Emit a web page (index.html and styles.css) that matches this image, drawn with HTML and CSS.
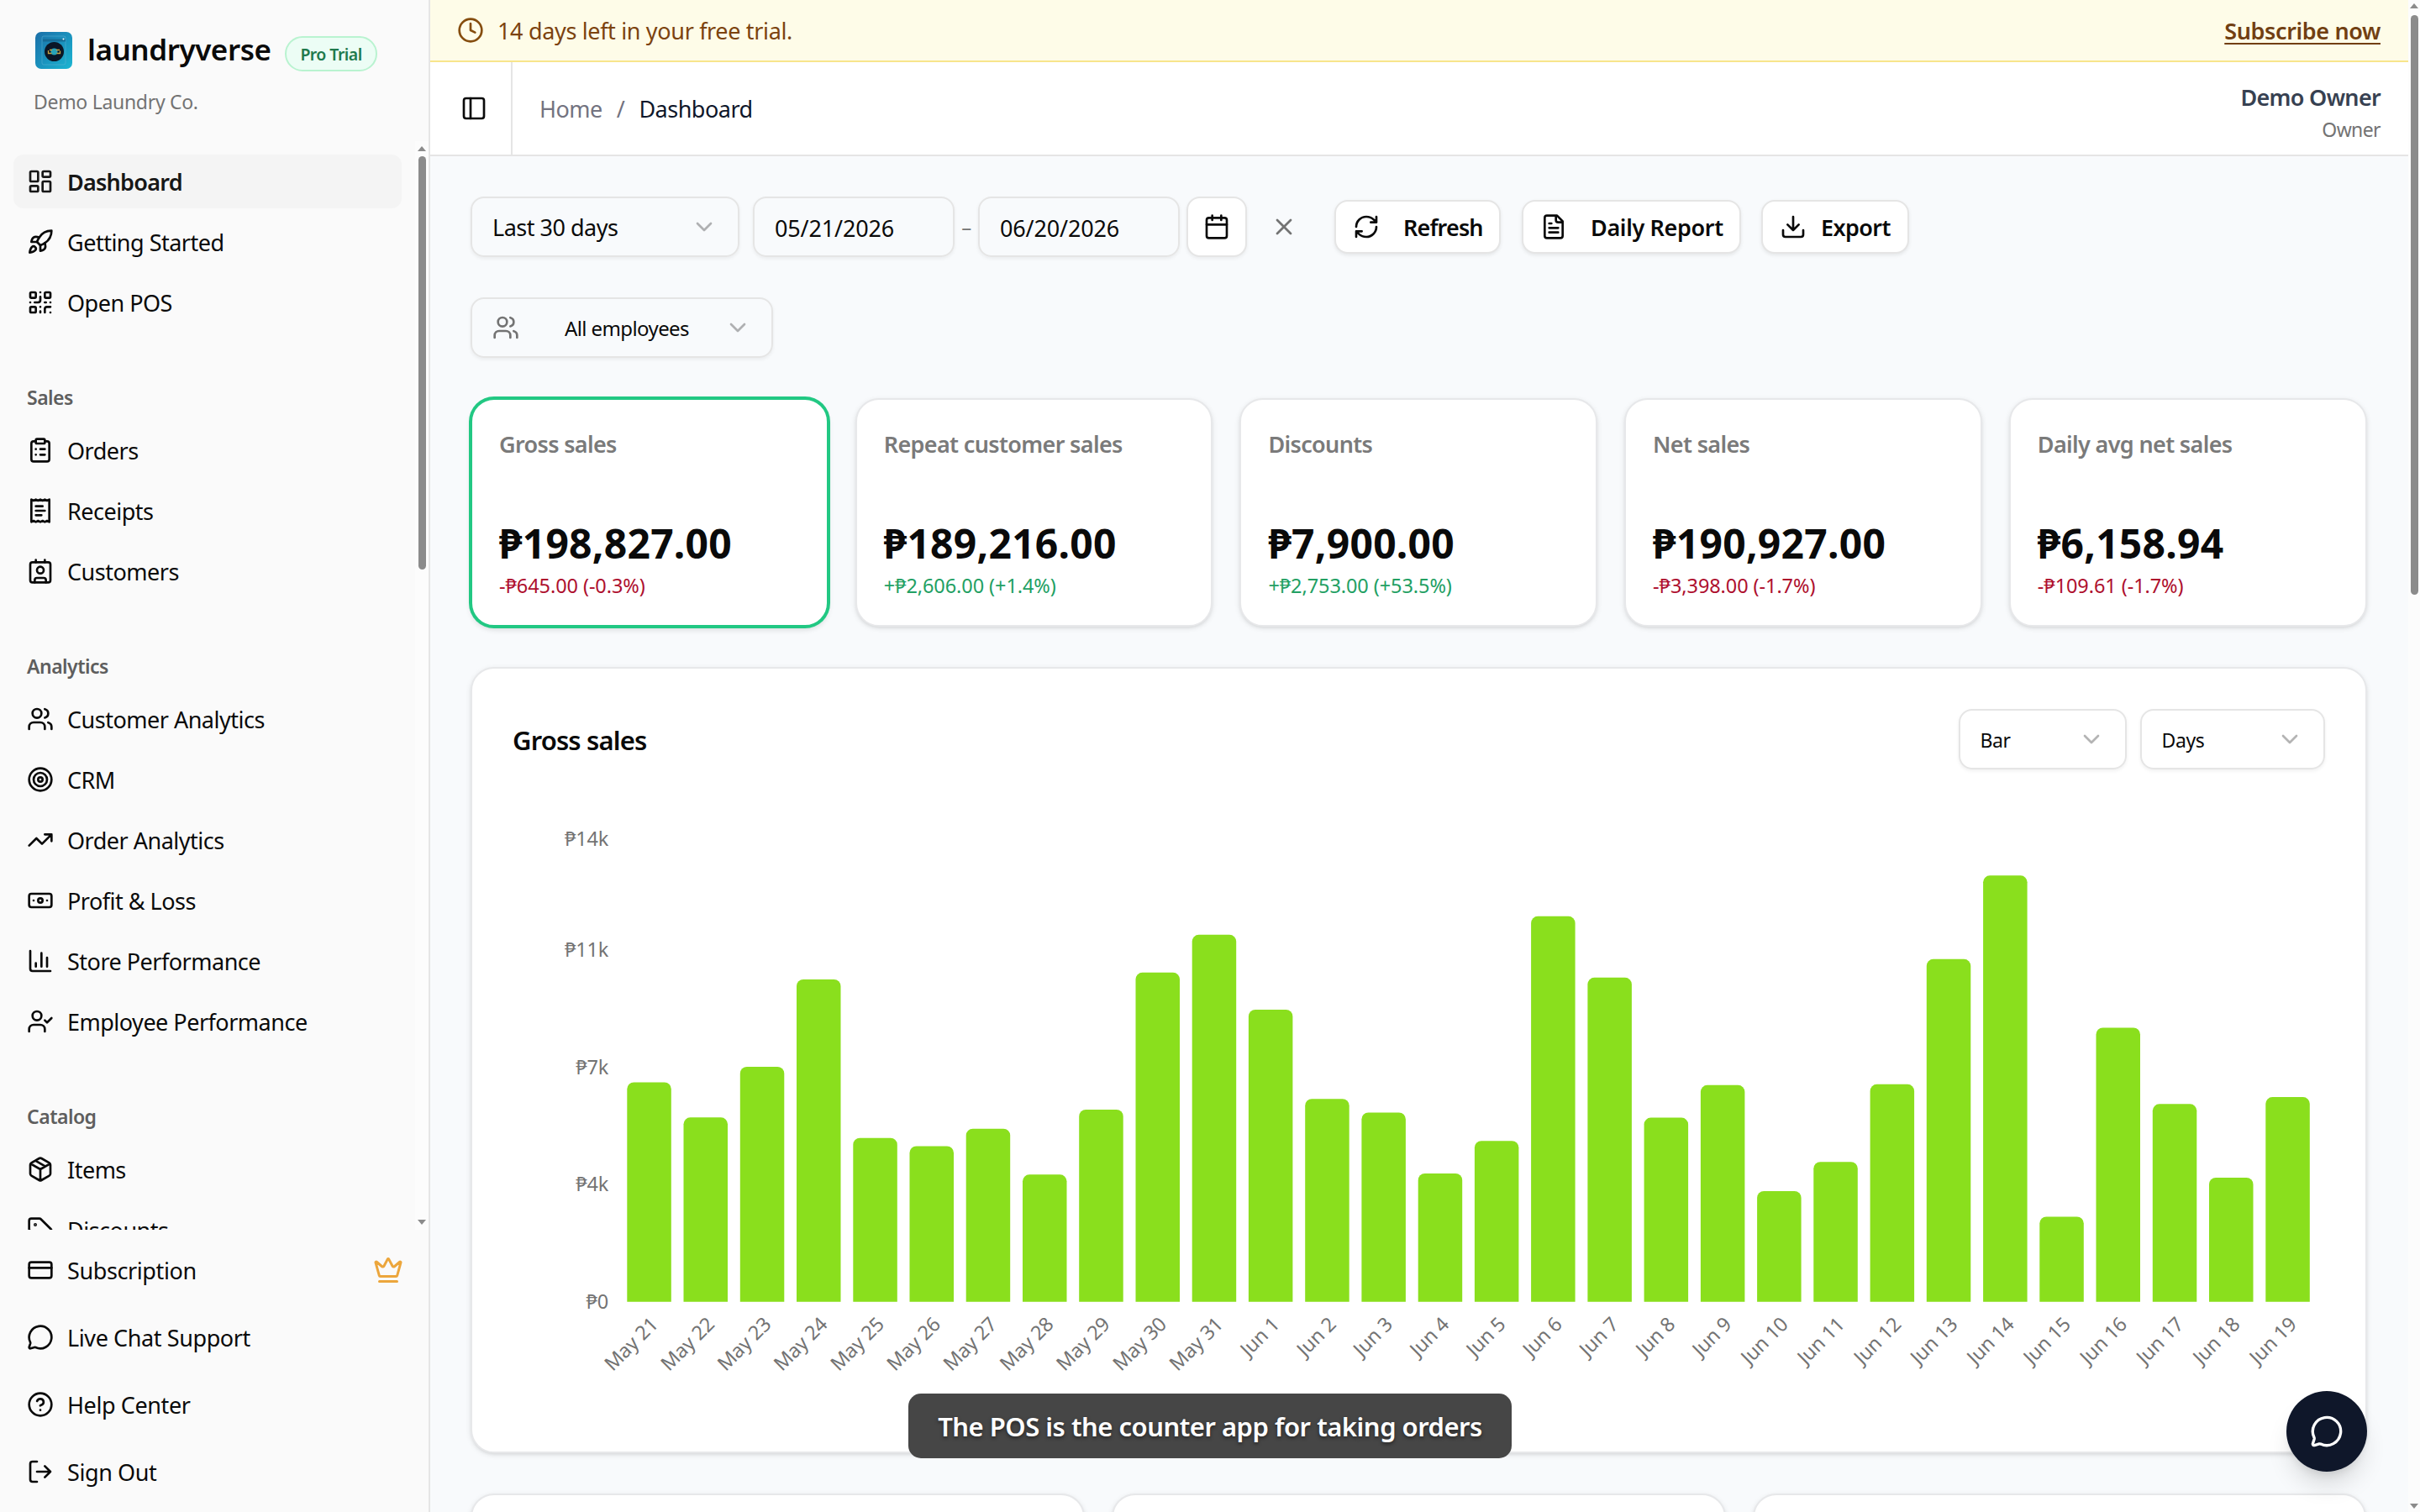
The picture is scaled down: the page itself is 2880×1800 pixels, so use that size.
FILE: index.html
```html
<!DOCTYPE html>
<html lang="en">
<head>
<meta charset="utf-8">
<title>Dashboard - laundryverse</title>
<link rel="stylesheet" href="styles.css">
</head>
<body>
<svg class="sprite" aria-hidden="true">
  <symbol id="dashboard" viewBox="0 0 24 24"><rect x="3" y="3" width="7" height="9" rx="1"/><rect x="14" y="3" width="7" height="5" rx="1"/><rect x="14" y="12" width="7" height="9" rx="1"/><rect x="3" y="16" width="7" height="5" rx="1"/></symbol>
  <symbol id="rocket" viewBox="0 0 24 24"><path d="M4.5 16.5c-1.5 1.26-2 5-2 5s3.74-.5 5-2c.71-.84.7-2.13-.09-2.91a2.18 2.18 0 0 0-2.91-.09z"/><path d="m12 15-3-3a22 22 0 0 1 2-3.95A12.88 12.88 0 0 1 22 2c0 2.72-.78 7.5-6 11a22.35 22.35 0 0 1-4 2z"/><path d="M9 12H4s.55-3.03 2-4c1.62-1.08 5 0 5 0"/><path d="M12 15v5s3.03-.55 4-2c1.08-1.62 0-5 0-5"/></symbol>
  <symbol id="qr" viewBox="0 0 24 24"><rect x="3" y="3" width="5" height="5" rx="1"/><rect x="16" y="3" width="5" height="5" rx="1"/><rect x="3" y="16" width="5" height="5" rx="1"/><path d="M21 16h-3a2 2 0 0 0-2 2v3M21 21v.01M12 7v3a2 2 0 0 1-2 2H7M3 12h.01M12 3h.01M12 16v.01M16 12h1M21 12v.01M12 21v-1"/></symbol>
  <symbol id="clipboard" viewBox="0 0 24 24"><rect x="8" y="2" width="8" height="4" rx="1"/><path d="M16 4h2a2 2 0 0 1 2 2v14a2 2 0 0 1-2 2H6a2 2 0 0 1-2-2V6a2 2 0 0 1 2-2h2M12 11h4M12 16h4M8 11h.01M8 16h.01"/></symbol>
  <symbol id="receipt" viewBox="0 0 24 24"><path d="M4 2v20l2-1 2 1 2-1 2 1 2-1 2 1 2-1 2 1V2l-2 1-2-1-2 1-2-1-2 1-2-1-2 1ZM14 8H8M16 12H8M13 16H8"/></symbol>
  <symbol id="contact" viewBox="0 0 24 24"><path d="M16 2v2M7 22v-2a2 2 0 0 1 2-2h6a2 2 0 0 1 2 2v2M8 2v2"/><circle cx="12" cy="11" r="3"/><rect x="3" y="4" width="18" height="18" rx="2"/></symbol>
  <symbol id="users" viewBox="0 0 24 24"><path d="M16 21v-2a4 4 0 0 0-4-4H6a4 4 0 0 0-4 4v2M22 21v-2a4 4 0 0 0-3-3.87M16 3.13a4 4 0 0 1 0 7.75"/><circle cx="9" cy="7" r="4"/></symbol>
  <symbol id="target" viewBox="0 0 24 24"><circle cx="12" cy="12" r="10"/><circle cx="12" cy="12" r="6"/><circle cx="12" cy="12" r="2"/></symbol>
  <symbol id="trend" viewBox="0 0 24 24"><path d="M22 7l-8.5 8.5-5-5L2 17M16 7h6v6"/></symbol>
  <symbol id="banknote" viewBox="0 0 24 24"><rect x="2" y="6" width="20" height="12" rx="2"/><circle cx="12" cy="12" r="2"/><path d="M6 12h.01M18 12h.01"/></symbol>
  <symbol id="columns" viewBox="0 0 24 24"><path d="M3 3v16a2 2 0 0 0 2 2h16M18 17V9M13 17V5M8 17v-3"/></symbol>
  <symbol id="user-check" viewBox="0 0 24 24"><path d="m16 11 2 2 4-4M16 21v-2a4 4 0 0 0-4-4H6a4 4 0 0 0-4 4v2"/><circle cx="9" cy="7" r="4"/></symbol>
  <symbol id="package" viewBox="0 0 24 24"><path d="M11 21.73a2 2 0 0 0 2 0l7-4A2 2 0 0 0 21 16V8a2 2 0 0 0-1-1.73l-7-4a2 2 0 0 0-2 0l-7 4A2 2 0 0 0 3 8v8a2 2 0 0 0 1 1.73zM12 22V12M3.29 7 12 12l8.71-5M7.5 4.27l9 5.15"/></symbol>
  <symbol id="tag" viewBox="0 0 24 24"><path d="M12.586 2.586A2 2 0 0 0 11.172 2H4a2 2 0 0 0-2 2v7.172a2 2 0 0 0 .586 1.414l8.704 8.704a2.426 2.426 0 0 0 3.42 0l6.58-6.58a2.426 2.426 0 0 0 0-3.42z"/><circle cx="7.5" cy="7.5" r=".5" fill="currentColor"/></symbol>
  <symbol id="card" viewBox="0 0 24 24"><rect x="2" y="5" width="20" height="14" rx="2"/><path d="M2 10h20"/></symbol>
  <symbol id="chat" viewBox="0 0 24 24"><path d="M2.992 16.342a2 2 0 0 1 .094 1.167l-1.065 3.29a1 1 0 0 0 1.236 1.168l3.413-.998a2 2 0 0 1 1.099.092 10 10 0 1 0-4.777-4.719"/></symbol>
  <symbol id="help" viewBox="0 0 24 24"><circle cx="12" cy="12" r="10"/><path d="M9.09 9a3 3 0 0 1 5.83 1c0 2-3 3-3 3M12 17h.01"/></symbol>
  <symbol id="logout" viewBox="0 0 24 24"><path d="M9 21H5a2 2 0 0 1-2-2V5a2 2 0 0 1 2-2h4M16 17l5-5-5-5M21 12H9"/></symbol>
  <symbol id="crown" viewBox="0 0 24 24"><path d="M11.562 3.266a.5.5 0 0 1 .876 0L15.39 8.87a1 1 0 0 0 1.516.294L21.183 5.5a.5.5 0 0 1 .798.519l-2.834 10.246a1 1 0 0 1-.956.734H5.81a1 1 0 0 1-.957-.734L2.02 6.02a.5.5 0 0 1 .798-.519l4.276 3.664a1 1 0 0 0 1.516-.294zM5 21h14"/></symbol>
  <symbol id="clock" viewBox="0 0 24 24"><circle cx="12" cy="12" r="10"/><path d="M12 6v6l4 2"/></symbol>
  <symbol id="panel" viewBox="0 0 24 24"><rect x="3" y="3" width="18" height="18" rx="2"/><path d="M9 3v18"/></symbol>
  <symbol id="calendar" viewBox="0 0 24 24"><path d="M8 2v4M16 2v4M3 10h18"/><rect x="3" y="4" width="18" height="18" rx="2"/></symbol>
  <symbol id="close" viewBox="0 0 24 24"><path d="M18 6 6 18M6 6l12 12"/></symbol>
  <symbol id="refresh" viewBox="0 0 24 24"><path d="M3 12a9 9 0 0 1 9-9 9.75 9.75 0 0 1 6.74 2.74L21 8M21 3v5h-5M21 12a9 9 0 0 1-9 9 9.75 9.75 0 0 1-6.74-2.74L3 16M8 16H3v5"/></symbol>
  <symbol id="file" viewBox="0 0 24 24"><path d="M15 2H6a2 2 0 0 0-2 2v16a2 2 0 0 0 2 2h12a2 2 0 0 0 2-2V7ZM14 2v4a2 2 0 0 0 2 2h4M10 9H8M16 13H8M16 17H8"/></symbol>
  <symbol id="download" viewBox="0 0 24 24"><path d="M21 15v4a2 2 0 0 1-2 2H5a2 2 0 0 1-2-2v-4M7 10l5 5 5-5M12 15V3"/></symbol>
  <symbol id="chevron" viewBox="0 0 24 24"><path d="m6 9 6 6 6-6"/></symbol>
</svg>

<div class="app">
  <aside class="sidebar">
    <div class="brand">
      <div class="brand-row">
        <svg class="logo" viewBox="0 0 44 44">
          <defs><linearGradient id="lg" x1="0" y1="0" x2="1" y2="1"><stop offset="0" stop-color="#1b6fa8"/><stop offset=".5" stop-color="#1a91bd"/><stop offset="1" stop-color="#1cb6d2"/></linearGradient></defs>
          <rect width="44" height="44" rx="7" fill="url(#lg)"/>
          <rect x="8" y="5" width="28" height="34" rx="2" fill="none" stroke="#5fb4d6" stroke-opacity=".5"/>
          <path d="M9 10h27" stroke="#145a80" stroke-opacity=".6" stroke-width="3"/>
          <circle cx="33.500" cy="8.500" r="1" fill="#fff"/>
          <circle cx="22.500" cy="23.500" r="11.500" fill="#0b1626"/>
          <circle cx="22.500" cy="23.500" r="4" fill="#27a3b8"/>
          <path d="M15.500 22v3.500h4M29.500 22.500v3h-4M17 21.500h3M25 21.500h4" fill="none" stroke="#c8a545" stroke-width="1.300"/>
        </svg>
        <span class="wordmark">laundryverse</span>
        <span class="trial-badge">Pro Trial</span>
      </div>
      <div class="company">Demo Laundry Co.</div>
    </div>

    <div class="nav-scroll">
      <nav class="nav">
        <div class="nav-group">
          <a class="nav-item active"><svg class="icon"><use href="#dashboard"/></svg>Dashboard</a>
          <a class="nav-item"><svg class="icon"><use href="#rocket"/></svg>Getting Started</a>
          <a class="nav-item"><svg class="icon"><use href="#qr"/></svg>Open POS</a>
        </div>
        <div class="nav-group">
          <div class="nav-label">Sales</div>
          <a class="nav-item"><svg class="icon"><use href="#clipboard"/></svg>Orders</a>
          <a class="nav-item"><svg class="icon"><use href="#receipt"/></svg>Receipts</a>
          <a class="nav-item"><svg class="icon"><use href="#contact"/></svg>Customers</a>
        </div>
        <div class="nav-group">
          <div class="nav-label">Analytics</div>
          <a class="nav-item"><svg class="icon"><use href="#users"/></svg>Customer Analytics</a>
          <a class="nav-item"><svg class="icon"><use href="#target"/></svg>CRM</a>
          <a class="nav-item"><svg class="icon"><use href="#trend"/></svg>Order Analytics</a>
          <a class="nav-item"><svg class="icon"><use href="#banknote"/></svg>Profit &amp; Loss</a>
          <a class="nav-item"><svg class="icon"><use href="#columns"/></svg>Store Performance</a>
          <a class="nav-item"><svg class="icon"><use href="#user-check"/></svg>Employee Performance</a>
        </div>
        <div class="nav-group">
          <div class="nav-label">Catalog</div>
          <a class="nav-item"><svg class="icon"><use href="#package"/></svg>Items</a>
          <a class="nav-item"><svg class="icon"><use href="#tag"/></svg>Discounts</a>
        </div>
      </nav>
      <div class="scrollbar scrollbar-nav"><i class="arrow-up"></i><i class="thumb"></i><i class="arrow-down"></i></div>
    </div>

    <div class="nav-footer">
      <a class="nav-item"><svg class="icon"><use href="#card"/></svg>Subscription<svg class="icon crown"><use href="#crown"/></svg></a>
      <a class="nav-item"><svg class="icon"><use href="#chat"/></svg>Live Chat Support</a>
      <a class="nav-item"><svg class="icon"><use href="#help"/></svg>Help Center</a>
      <a class="nav-item"><svg class="icon"><use href="#logout"/></svg>Sign Out</a>
    </div>
  </aside>

  <main class="main">
    <div class="banner">
      <svg class="icon"><use href="#clock"/></svg>
      <span class="banner-text">14 days left in your free trial.</span>
      <a class="subscribe">Subscribe now</a>
    </div>
    <header class="topbar">
      <div class="toggle"><svg class="icon"><use href="#panel"/></svg></div>
      <div class="crumbs"><span>Home</span><span>/</span><span class="here">Dashboard</span></div>
      <div class="account"><div class="account-name">Demo Owner</div><div class="account-role">Owner</div></div>
    </header>

    <div class="content">
      <div class="filters">
        <div class="field preset">Last 30 days<svg class="icon chevron"><use href="#chevron"/></svg></div>
        <div class="dates">
          <div class="field date">05/21/2026</div>
          <span class="dash">–</span>
          <div class="field date">06/20/2026</div>
          <div class="field square"><svg class="icon"><use href="#calendar"/></svg></div>
          <div class="clear"><svg class="icon"><use href="#close"/></svg></div>
        </div>
        <div class="actions">
          <button class="button refresh"><svg class="icon"><use href="#refresh"/></svg>Refresh</button>
          <button class="button report"><svg class="icon"><use href="#file"/></svg>Daily Report</button>
          <button class="button export"><svg class="icon"><use href="#download"/></svg>Export</button>
        </div>
      </div>
      <div class="field employees"><svg class="icon"><use href="#users"/></svg><span>All employees</span><svg class="icon chevron"><use href="#chevron"/></svg></div>

      <section class="stats">
        <div class="card stat selected"><h3>Gross sales</h3><div class="value">₱198,827.00</div><div class="delta down">-₱645.00 (-0.3%)</div></div>
        <div class="card stat"><h3>Repeat customer sales</h3><div class="value">₱189,216.00</div><div class="delta up">+₱2,606.00 (+1.4%)</div></div>
        <div class="card stat"><h3>Discounts</h3><div class="value">₱7,900.00</div><div class="delta up">+₱2,753.00 (+53.5%)</div></div>
        <div class="card stat"><h3>Net sales</h3><div class="value">₱190,927.00</div><div class="delta down">-₱3,398.00 (-1.7%)</div></div>
        <div class="card stat"><h3>Daily avg net sales</h3><div class="value">₱6,158.94</div><div class="delta down">-₱109.61 (-1.7%)</div></div>
      </section>

      <section class="card chart-card">
        <div class="chart-head">
          <h2>Gross sales</h2>
          <div class="field small bar-select">Bar<svg class="icon chevron"><use href="#chevron"/></svg></div>
          <div class="field small day-select">Days<svg class="icon chevron"><use href="#chevron"/></svg></div>
        </div>
        <svg class="chart" viewBox="0 0 2158 716" width="2158" height="716">
          <defs><clipPath id="plot"><rect x="120" y="0" width="2038" height="585.700"/></clipPath></defs>
          <g class="axis" text-anchor="end">
            <text x="114" y="43">₱14k</text><text x="114" y="175">₱11k</text><text x="114" y="314.500">₱7k</text><text x="114" y="454">₱4k</text><text x="114" y="593.500">₱0</text>
          </g>
          <g class="bars" clip-path="url(#plot)">
            <rect x="136.300" y="324.500" width="52.500" height="300" rx="8"/>
            <rect x="203.500" y="366.300" width="52.500" height="300" rx="8"/>
            <rect x="270.800" y="306" width="52.500" height="300" rx="8"/>
            <rect x="338" y="202" width="52.500" height="400" rx="8"/>
            <rect x="405.300" y="390.700" width="52.500" height="300" rx="8"/>
            <rect x="472.500" y="400.500" width="52.500" height="300" rx="8"/>
            <rect x="539.700" y="379.700" width="52.500" height="300" rx="8"/>
            <rect x="607" y="434.300" width="52.500" height="300" rx="8"/>
            <rect x="674.200" y="357" width="52.500" height="300" rx="8"/>
            <rect x="741.500" y="193.800" width="52.500" height="500" rx="8"/>
            <rect x="808.700" y="148.800" width="52.500" height="500" rx="8"/>
            <rect x="875.900" y="238" width="52.500" height="500" rx="8"/>
            <rect x="943.200" y="344.200" width="52.500" height="300" rx="8"/>
            <rect x="1010.400" y="360.500" width="52.500" height="300" rx="8"/>
            <rect x="1077.700" y="433" width="52.500" height="300" rx="8"/>
            <rect x="1144.900" y="394.200" width="52.500" height="300" rx="8"/>
            <rect x="1212.100" y="126.800" width="52.500" height="500" rx="8"/>
            <rect x="1279.400" y="199.800" width="52.500" height="500" rx="8"/>
            <rect x="1346.600" y="366.600" width="52.500" height="300" rx="8"/>
            <rect x="1413.900" y="327.800" width="52.500" height="300" rx="8"/>
            <rect x="1481.100" y="453.900" width="52.500" height="300" rx="8"/>
            <rect x="1548.300" y="419.200" width="52.500" height="300" rx="8"/>
            <rect x="1615.600" y="326.800" width="52.500" height="300" rx="8"/>
            <rect x="1682.800" y="177.800" width="52.500" height="500" rx="8"/>
            <rect x="1750.100" y="78.300" width="52.500" height="600" rx="8"/>
            <rect x="1817.300" y="484.500" width="52.500" height="300" rx="8"/>
            <rect x="1884.500" y="259.500" width="52.500" height="400" rx="8"/>
            <rect x="1951.800" y="350.300" width="52.500" height="300" rx="8"/>
            <rect x="2019" y="438" width="52.500" height="300" rx="8"/>
            <rect x="2086.300" y="342.100" width="52.500" height="300" rx="8"/>
          </g>
          <g class="axis" text-anchor="end">
            <text transform="translate(162.500 602) rotate(-45)" dy="17">May 21</text>
            <text transform="translate(229.700 602) rotate(-45)" dy="17">May 22</text>
            <text transform="translate(297 602) rotate(-45)" dy="17">May 23</text>
            <text transform="translate(364.200 602) rotate(-45)" dy="17">May 24</text>
            <text transform="translate(431.500 602) rotate(-45)" dy="17">May 25</text>
            <text transform="translate(498.700 602) rotate(-45)" dy="17">May 26</text>
            <text transform="translate(565.900 602) rotate(-45)" dy="17">May 27</text>
            <text transform="translate(633.200 602) rotate(-45)" dy="17">May 28</text>
            <text transform="translate(700.400 602) rotate(-45)" dy="17">May 29</text>
            <text transform="translate(767.700 602) rotate(-45)" dy="17">May 30</text>
            <text transform="translate(834.900 602) rotate(-45)" dy="17">May 31</text>
            <text transform="translate(902.100 602) rotate(-45)" dy="17">Jun 1</text>
            <text transform="translate(969.400 602) rotate(-45)" dy="17">Jun 2</text>
            <text transform="translate(1036.600 602) rotate(-45)" dy="17">Jun 3</text>
            <text transform="translate(1103.900 602) rotate(-45)" dy="17">Jun 4</text>
            <text transform="translate(1171.100 602) rotate(-45)" dy="17">Jun 5</text>
            <text transform="translate(1238.300 602) rotate(-45)" dy="17">Jun 6</text>
            <text transform="translate(1305.600 602) rotate(-45)" dy="17">Jun 7</text>
            <text transform="translate(1372.800 602) rotate(-45)" dy="17">Jun 8</text>
            <text transform="translate(1440.100 602) rotate(-45)" dy="17">Jun 9</text>
            <text transform="translate(1507.300 602) rotate(-45)" dy="17">Jun 10</text>
            <text transform="translate(1574.500 602) rotate(-45)" dy="17">Jun 11</text>
            <text transform="translate(1641.800 602) rotate(-45)" dy="17">Jun 12</text>
            <text transform="translate(1709 602) rotate(-45)" dy="17">Jun 13</text>
            <text transform="translate(1776.300 602) rotate(-45)" dy="17">Jun 14</text>
            <text transform="translate(1843.500 602) rotate(-45)" dy="17">Jun 15</text>
            <text transform="translate(1910.700 602) rotate(-45)" dy="17">Jun 16</text>
            <text transform="translate(1978 602) rotate(-45)" dy="17">Jun 17</text>
            <text transform="translate(2045.200 602) rotate(-45)" dy="17">Jun 18</text>
            <text transform="translate(2112.500 602) rotate(-45)" dy="17">Jun 19</text>
          </g>
        </svg>
      </section>

      <section class="panels"><div class="card"></div><div class="card"></div><div class="card"></div></section>
    </div>
  </main>
  <div class="scrollbar scrollbar-page"><i class="arrow-up"></i><i class="thumb"></i><i class="arrow-down"></i></div>
</div>

<div class="caption">The POS is the counter app for taking orders</div>
<div class="fab"><svg class="icon"><use href="#chat"/></svg></div>
</body>
</html>
```
FILE: styles.css
```css
* { box-sizing: border-box; }

body {
  margin: 0;
  width: 2880px;
  height: 1800px;
  overflow: hidden;
  font-family: "Noto Sans", "Open Sans", sans-serif;
  font-size: 27px;
  line-height: 40px;
  letter-spacing: -0.5px;
  color: #0a0a0a;
  background: #f8fafc;
}

h2, h3 { margin: 0; font-weight: 600; }

.sprite { display: none; }

.icon {
  width: 32px;
  height: 32px;
  flex: none;
  fill: none;
  stroke: currentColor;
  stroke-width: 2;
  stroke-linecap: round;
  stroke-linejoin: round;
}

.app { display: flex; height: 1800px; }

/* Sidebar */
.sidebar {
  width: 512px;
  flex: none;
  display: flex;
  flex-direction: column;
  background: #fafafa;
  border-right: 2px solid #e5e5e5;
}
.brand { height: 168px; padding: 38px 40px 0; }
.brand-row { display: flex; align-items: flex-start; height: 63px; }
.logo { width: 44px; height: 44px; margin-left: 2px; flex: none; }
.wordmark { margin-left: 18px; width: 235px; font-size: 35px; font-weight: 600; letter-spacing: -0.45px; line-height: 41px; }
.trial-badge {
  margin-top: 5px;
  width: 110px;
  height: 42px;
  border: 2px solid #b9f3d0;
  border-radius: 21px;
  background: #ecfdf5;
  color: #1f7a4d;
  font-size: 19.5px;
  font-weight: 600;
  letter-spacing: -0.55px;
  line-height: 40px;
  text-align: center;
}
.company { font-size: 23px; letter-spacing: -0.3px; color: #737373; }

.nav-scroll { display: flex; height: 1296px; overflow: hidden; }
.nav { flex: none; width: 494px; display: flex; flex-direction: column; gap: 16px; }
.nav-group { display: flex; flex-direction: column; gap: 8px; padding: 16px; flex: none; }
.nav-label {
  height: 64px;
  margin-bottom: -8px;
  padding-left: 16px;
  line-height: 67px;
  font-size: 23px;
  font-weight: 600;
  letter-spacing: -0.5px;
  color: #5e5e5e;
}
.nav-item { display: flex; align-items: center; gap: 16px; height: 64px; padding: 2px 16px 0; border-radius: 12px; flex: none; }
.nav-item .icon, .field .icon, .button .icon { margin-top: -2px; }
.nav-item.active { background: #f4f4f4; font-weight: 600; letter-spacing: -0.75px; color: #171717; }
.nav-footer { display: flex; flex-direction: column; gap: 16px; padding: 16px 14px 16px 16px; }
.nav-footer .nav-item { letter-spacing: -0.4px; }
.nav-footer .crown { width: 36px; height: 36px; margin-left: auto; color: #eca63c; }

.scrollbar { display: flex; flex-direction: column; align-items: center; flex: none; background: #fcfcfc; }
.scrollbar .thumb { width: 9px; border-radius: 5px; background: #8b8b8b; }
.arrow-up, .arrow-down { width: 0; height: 0; border: 5px solid transparent; }
.arrow-up { border-top: 0; border-bottom: 6px solid #8b8b8b; }
.arrow-down { margin-top: auto; border-bottom: 0; border-top: 6px solid #8b8b8b; }
.scrollbar-nav { width: 16px; padding: 6px 0; }
.scrollbar-nav .thumb { height: 492px; margin-top: 6px; }

/* Page header */
.main { width: 2354px; flex: none; height: 1800px; overflow: hidden; }
.banner {
  display: flex;
  align-items: center;
  height: 74px;
  padding: 0 33px 0 32px;
  border-bottom: 2px solid #f8e58c;
  background: #fefce8;
  color: #854d0e;
}
.banner-text { margin: 2px 0 0 16px; letter-spacing: -0.34px; color: #7c430f; }
.subscribe {
  margin: 2px 0 0 auto;
  font-weight: 600;
  letter-spacing: -0.38px;
  color: #713f12;
  text-decoration: underline;
  text-decoration-thickness: 2px;
  text-underline-offset: 4px;
}
.topbar { display: flex; height: 112px; border-bottom: 2px solid #e5e5e5; background: #fff; }
.toggle { display: flex; align-items: center; justify-content: center; width: 98px; padding-left: 8px; border-right: 2px solid #e5e5e5; }
.crumbs { display: flex; align-items: center; gap: 17px; padding: 2px 0 0 32px; color: #737380; }
.crumbs .here { color: #0f172a; }
.account { margin-left: auto; padding: 22px 33px 0 0; text-align: right; }
.account-name { font-weight: 600; color: #374151; letter-spacing: -0.7px; }
.account-role { margin-top: -2px; font-size: 23px; letter-spacing: -0.6px; color: #737373; }

/* Filters */
.content { padding: 48px 49.5px 48px 48px; }
.filters { display: flex; align-items: center; gap: 16px; height: 72px; }
.field {
  display: flex;
  align-items: center;
  height: 72px;
  padding: 2px 24px 0;
  border: 2px solid #e5e5e5;
  border-radius: 16px;
  box-shadow: 0 2px 4px rgba(0, 0, 0, 0.06);
}
.chevron { margin-left: auto; opacity: 0.3; }
.preset { width: 320px; }
.dates { display: flex; align-items: center; gap: 8px; }
.date { width: 240px; padding-top: 3px; letter-spacing: -0.15px; }
.dash { width: 12px; display: flex; justify-content: center; font-size: 24px; color: #737373; }
.square { width: 72px; padding: 2px 0 0; justify-content: center; background: #fff; }
.clear { display: flex; width: 72px; justify-content: center; color: #737373; }
.actions { display: flex; gap: 24px; margin-left: 8px; }
.button {
  display: flex;
  align-items: center;
  height: 64px;
  padding: 2px 20px 0;
  gap: 28px;
  border: 2px solid #e5e5e5;
  border-radius: 16px;
  background: #fff;
  box-shadow: 0 2px 4px rgba(0, 0, 0, 0.08);
  font: inherit;
  font-weight: 600;
  letter-spacing: -0.85px;
  color: #0a0a0a;
  white-space: nowrap;
}
.refresh { width: 198px; }
.report { width: 261px; margin-left: 1px; letter-spacing: -0.35px; }
.export { width: 176px; gap: 17px; letter-spacing: -0.6px; }
.employees { width: 360px; margin-top: 48px; font-size: 24px; letter-spacing: -0.6px; }
.employees span { margin-left: 54px; }
.employees .icon:first-child { color: #737373; }

/* Cards */
.card {
  border: 2px solid #e7e8ea;
  border-radius: 28px;
  background: #fff;
  box-shadow: 0 2px 6px rgba(0, 0, 0, 0.1), 0 2px 4px -2px rgba(0, 0, 0, 0.1);
}
.stats { display: grid; grid-template-columns: repeat(5, 1fr); gap: 32px; margin-top: 48px; }
.stat { height: 272px; padding: 33px 32px; }
.stat h3 { font-size: 27px; letter-spacing: -0.65px; color: #7a7a7a; line-height: 40px; }
.value { margin-top: 70px; font-size: 48px; font-weight: 700; letter-spacing: 0.25px; line-height: 56px; }
.delta { margin-top: 6px; font-size: 23.5px; letter-spacing: -0.08px; line-height: 32px; }
.down { color: #ae0f2e; }
.up { color: #22a063; }
.stat.selected { border-color: #22c883; box-shadow: 0 0 0 2px #22c883, 0 4px 6px rgba(0, 0, 0, 0.12); }

.chart-card { height: 936px; margin-top: 48px; padding: 48px; }
.chart-head { display: flex; align-items: center; gap: 16px; height: 72px; }
.chart-head h2 { margin: 2px auto 0 0; font-size: 31px; letter-spacing: -0.85px; }
.small { font-size: 23px; letter-spacing: -0.4px; }
.bar-select { width: 200px; }
.day-select { width: 220px; }
.chart { display: block; margin-top: 48px; }
.axis { font-size: 23.5px; letter-spacing: -0.2px; fill: #737373; }
.bars { fill: #8adf1d; }

.panels { display: grid; grid-template-columns: repeat(3, 1fr); gap: 32px; margin-top: 48px; }
.panels .card { height: 400px; }

.scrollbar-page { width: 14px; height: 1800px; padding: 4px 0; }
.scrollbar-page .thumb { height: 690px; margin-top: 8px; }

/* Overlays */
.caption {
  position: absolute;
  left: 1081px;
  top: 1659px;
  width: 718px;
  height: 77px;
  border-radius: 15px;
  background: #464646;
  color: #fff;
  font-size: 31px;
  font-weight: 600;
  letter-spacing: -0.5px;
  line-height: 79px;
  text-align: center;
  white-space: nowrap;
  text-shadow: 0 2px 4px rgba(0, 0, 0, 0.5);
}
.fab {
  position: absolute;
  left: 2721px;
  top: 1656px;
  width: 96px;
  height: 96px;
  display: flex;
  align-items: center;
  justify-content: center;
  border-radius: 50%;
  background: #0f172a;
  color: #fff;
  box-shadow: 0 20px 30px -6px rgba(0, 0, 0, 0.14), 0 8px 12px -6px rgba(0, 0, 0, 0.12);
}
.fab .icon { width: 40px; height: 40px; }
```
